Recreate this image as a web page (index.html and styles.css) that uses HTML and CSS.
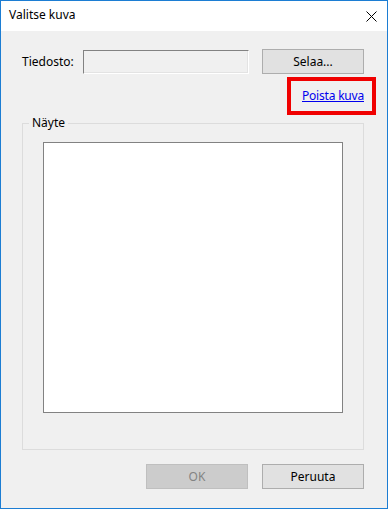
FILE: index.html
```html
<!DOCTYPE html>
<html lang="fi">
<head>
<meta charset="utf-8">
<title>Valitse kuva</title>
<link rel="stylesheet" href="styles.css">
</head>
<body>
<div class="window">
  <div class="titlebar">
    <span class="title">Valitse kuva</span>
    <svg class="close" width="11" height="11" viewBox="0 0 11 11" aria-hidden="true">
      <path d="M0.5 0.5 L10.5 10.5 M10.5 0.5 L0.5 10.5" stroke="#000" stroke-width="1" fill="none"/>
    </svg>
  </div>
  <div class="content">
    <div class="file-row">
      <label class="file-label">Tiedosto:</label>
      <div class="file-input"></div>
      <button class="btn">Selaa...</button>
    </div>
    <div class="link-row">
      <span class="highlight"><a class="link" href="#">Poista kuva</a></span>
    </div>
    <fieldset class="group">
      <legend class="group-title">Näyte</legend>
      <div class="preview"></div>
    </fieldset>
    <div class="actions">
      <button class="btn btn-disabled">OK</button>
      <button class="btn">Peruuta</button>
    </div>
  </div>
</div>
</body>
</html>
```
FILE: styles.css
```css
html, body {
  margin: 0;
  padding: 0;
  background: #f0f0f0;
}
body {
  font-family: "Noto Sans", "Open Sans", sans-serif;
  font-size: 12px;
  color: #000;
}
.window {
  width: 388px;
  height: 509px;
  box-sizing: border-box;
  border: 1px solid #1c7dd3;
  background: #f0f0f0;
  display: flex;
  flex-direction: column;
}
.titlebar {
  height: 30px;
  flex: none;
  background: #fff;
  display: flex;
  align-items: center;
  justify-content: space-between;
  padding: 0 10px 0 8px;
}
.title {
  line-height: 16px;
  margin-top: -2px;
}
.close {
  display: block;
  margin-top: 1px;
}
.content {
  flex: 1;
  padding: 18px 23px 0 21px;
}
.file-row {
  display: flex;
  align-items: flex-start;
  height: 25px;
}
.file-label {
  width: 61px;
  line-height: 25px;
  flex: none;
}
.file-input {
  width: 166px;
  height: 24px;
  margin-top: 1px;
  box-sizing: border-box;
  border: 1px solid;
  border-color: #828282 #ffffff #ffffff #828282;
  box-shadow: inset -1px -1px 0 #e3e3e3;
  background: #f0f0f0;
  flex: none;
}
.btn {
  width: 102px;
  height: 25px;
  box-sizing: border-box;
  border: 1px solid #adadad;
  background: #e1e1e1;
  font-family: inherit;
  font-size: 12px;
  color: #000;
  padding: 0;
  margin: 0;
}
.file-row .btn {
  margin-left: 13px;
}
.link-row {
  margin-top: 14px;
  display: flex;
  justify-content: flex-end;
  line-height: 16px;
  height: 16px;
}
.highlight {
  position: relative;
}
.highlight::after {
  content: "";
  position: absolute;
  top: -11px;
  bottom: -11px;
  right: -12px;
  width: 89px;
  box-sizing: border-box;
  border: 4px solid #f00000;
}
.link {
  color: #0000ee;
  text-decoration: underline;
  letter-spacing: -0.2px;
}
.group {
  margin: 11px 0 0 0;
  padding: 0 0 36px 0;
  border: 1px solid #dcdcdc;
  min-width: 0;
}
.group-title {
  margin-left: 6px;
  padding: 0 3px;
  line-height: 16px;
}
.preview {
  width: 300px;
  height: 271px;
  box-sizing: border-box;
  margin: 11px auto 0 auto;
  border: 1px solid #828282;
  background: #fff;
}
.actions {
  margin-top: 14px;
  display: flex;
  justify-content: flex-end;
  gap: 14px;
}
.btn-disabled {
  background: #cccccc;
  border-color: #bfbfbf;
  color: #838383;
}
```
